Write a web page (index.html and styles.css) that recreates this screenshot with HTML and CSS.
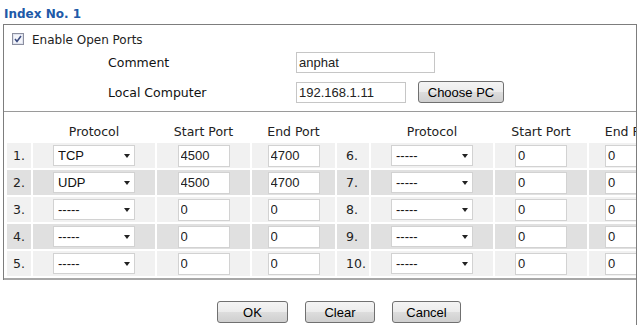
FILE: index.html
```html
<!DOCTYPE html>
<html lang="en">

<head>
  <meta charset="UTF-8" />
  <title>Open Ports - Index No. 1</title>
  <link rel="stylesheet" href="styles.css">
</head>

<body>

  <h1 class="title">Index No. 1</h1>

  <div class="panel">
    <!-- Top settings -->
    <div class="settings">
      <label class="enable">
        <span class="check">
          <svg width="12" height="12" viewBox="0 0 12 12">
            <rect x="0.5" y="0.5" width="11" height="11" fill="#dfe3ee" stroke="#8c8fa0" />
            <rect x="2" y="2" width="8" height="8" fill="#f4f5fa" />
            <path d="M3 6 L5 8.5 L9 3" fill="none" stroke="#3c4c80" stroke-width="1.6" />
          </svg>
        </span>
        Enable Open Ports
      </label>
      <div class="field">
        <span class="field-label">Comment</span>
        <input class="text comment" type="text" value="anphat">
      </div>
      <div class="field">
        <span class="field-label">Local Computer</span>
        <input class="text local" type="text" value="192.168.1.11">
        <button class="btn choose">Choose PC</button>
      </div>
    </div>

    <!-- Port table -->
    <div class="ports">
      <div class="port-grid">
        <div class="head"></div>
        <div class="head">Protocol</div>
        <div class="head">Start Port</div>
        <div class="head">End Port</div>
        <div class="head"></div>
        <div class="head">Protocol</div>
        <div class="head">Start Port</div>
        <div class="head">End Port</div>

        <div class="cell num">1.</div>
        <div class="cell"><span class="select"><select><option>TCP</option></select></span></div>
        <div class="cell"><input class="port" type="text" value="4500"></div>
        <div class="cell"><input class="port" type="text" value="4700"></div>
        <div class="cell num num-right">6.</div>
        <div class="cell"><span class="select"><select><option>-----</option></select></span></div>
        <div class="cell"><input class="port" type="text" value="0"></div>
        <div class="cell"><input class="port" type="text" value="0"></div>

        <div class="cell alt num">2.</div>
        <div class="cell alt"><span class="select"><select><option>UDP</option></select></span></div>
        <div class="cell alt"><input class="port" type="text" value="4500"></div>
        <div class="cell alt"><input class="port" type="text" value="4700"></div>
        <div class="cell alt num num-right">7.</div>
        <div class="cell alt"><span class="select"><select><option>-----</option></select></span></div>
        <div class="cell alt"><input class="port" type="text" value="0"></div>
        <div class="cell alt"><input class="port" type="text" value="0"></div>

        <div class="cell num">3.</div>
        <div class="cell"><span class="select"><select><option>-----</option></select></span></div>
        <div class="cell"><input class="port" type="text" value="0"></div>
        <div class="cell"><input class="port" type="text" value="0"></div>
        <div class="cell num num-right">8.</div>
        <div class="cell"><span class="select"><select><option>-----</option></select></span></div>
        <div class="cell"><input class="port" type="text" value="0"></div>
        <div class="cell"><input class="port" type="text" value="0"></div>

        <div class="cell alt num">4.</div>
        <div class="cell alt"><span class="select"><select><option>-----</option></select></span></div>
        <div class="cell alt"><input class="port" type="text" value="0"></div>
        <div class="cell alt"><input class="port" type="text" value="0"></div>
        <div class="cell alt num num-right">9.</div>
        <div class="cell alt"><span class="select"><select><option>-----</option></select></span></div>
        <div class="cell alt"><input class="port" type="text" value="0"></div>
        <div class="cell alt"><input class="port" type="text" value="0"></div>

        <div class="cell num">5.</div>
        <div class="cell"><span class="select"><select><option>-----</option></select></span></div>
        <div class="cell"><input class="port" type="text" value="0"></div>
        <div class="cell"><input class="port" type="text" value="0"></div>
        <div class="cell num num-right">10.</div>
        <div class="cell"><span class="select"><select><option>-----</option></select></span></div>
        <div class="cell"><input class="port" type="text" value="0"></div>
        <div class="cell"><input class="port" type="text" value="0"></div>
      </div>
    </div>
  </div>

  <!-- Buttons -->
  <div class="actions">
    <button class="btn ok">OK</button>
    <button class="btn clear">Clear</button>
    <button class="btn cancel">Cancel</button>
  </div>

</body>

</html>
```

FILE: styles.css
```css
* {
  box-sizing: border-box;
}

body {
  margin: 0;
  background: #fff;
  color: #111;
  font-family: "DejaVu Sans", Verdana, sans-serif;
}

.title {
  margin: 0;
  height: 24px;
  padding: 6px 0 2px 4px;
  font-size: 12px;
  line-height: 16px;
  font-weight: bold;
  color: #2059a8;
}

.panel {
  margin-left: 3px;
  width: 634px;
  border: 1px solid #7d7d7d;
  border-bottom: 0;
  overflow: hidden;
}

.settings {
  padding: 6px 0 7px;
}

.enable {
  display: flex;
  align-items: center;
  height: 18px;
  margin-bottom: 1px;
  padding-left: 8px;
  font-size: 12px;
  line-height: 18px;
  color: #222;
}

.check {
  display: flex;
  width: 12px;
  height: 12px;
  margin: -3px 8px 0 0;
}

.field {
  display: flex;
  align-items: center;
  height: 24px;
  padding-left: 104px;
  font-size: 12.5px;
}

.field + .field {
  margin-top: 6px;
}

.field-label {
  width: 188px;
}

.text {
  height: 21px;
  border: 1px solid #c6c6c6;
  padding: 0 2px;
  font: 13px "Liberation Sans", Arial, sans-serif;
  color: #222;
}

.comment {
  width: 139px;
}

.local {
  width: 110px;
}

.btn {
  height: 22px;
  padding: 0;
  border: 1px solid #707070;
  border-radius: 3px;
  background: linear-gradient(#f4f4f4, #ebebeb 50%, #dddddd 50%, #cfcfcf);
  font: 13px "Liberation Sans", Arial, sans-serif;
  color: #000;
}

.choose {
  width: 86px;
  margin-left: 12px;
}

.ports {
  border-top: 1px solid #9a9a9a;
  border-bottom: 2px solid #a8a8a8;
  padding: 0 0 2px 3px;
}

.port-grid {
  display: grid;
  grid-template-columns: 24px 122px 93px 83px 32px 122px 92px 84px;
  grid-template-rows: 29px repeat(5, 25px);
  gap: 2px;
  width: max-content;
  font-size: 12.5px;
}

.head {
  padding-top: 12px;
  line-height: 15px;
  text-align: center;
  color: #222;
}

.cell {
  display: flex;
  align-items: center;
  justify-content: center;
  background: #f1f1f1;
}

.cell.alt {
  background: #e0e0e0;
}

.num {
  justify-content: flex-start;
  padding-left: 6px;
  color: #222;
}

.num-right {
  padding-left: 9px;
}

.port {
  width: 52px;
  height: 22px;
  border: 1px solid #d2d2d2;
  padding: 0 2px;
  font: 13px "Liberation Sans", Arial, sans-serif;
  color: #222;
}

.select {
  position: relative;
  display: block;
  width: 82px;
  height: 21px;
}

.select select {
  width: 100%;
  height: 100%;
  appearance: none;
  border: 1px solid #d2d2d2;
  border-radius: 0;
  background: #fff;
  padding: 0 0 0 4px;
  font: 13px "Liberation Sans", Arial, sans-serif;
  color: #111;
}

.select::after {
  content: "";
  position: absolute;
  right: 5px;
  top: 9px;
  border-left: 3px solid transparent;
  border-right: 3px solid transparent;
  border-top: 4px solid #222;
}

.actions {
  display: flex;
  gap: 17px;
  margin-left: 3px;
  width: 634px;
  height: 45px;
  border-right: 1px solid #7d7d7d;
  padding: 21px 0 0 214px;
}

.ok {
  width: 71px;
}

.clear {
  width: 70px;
}

.cancel {
  width: 69px;
}
```
